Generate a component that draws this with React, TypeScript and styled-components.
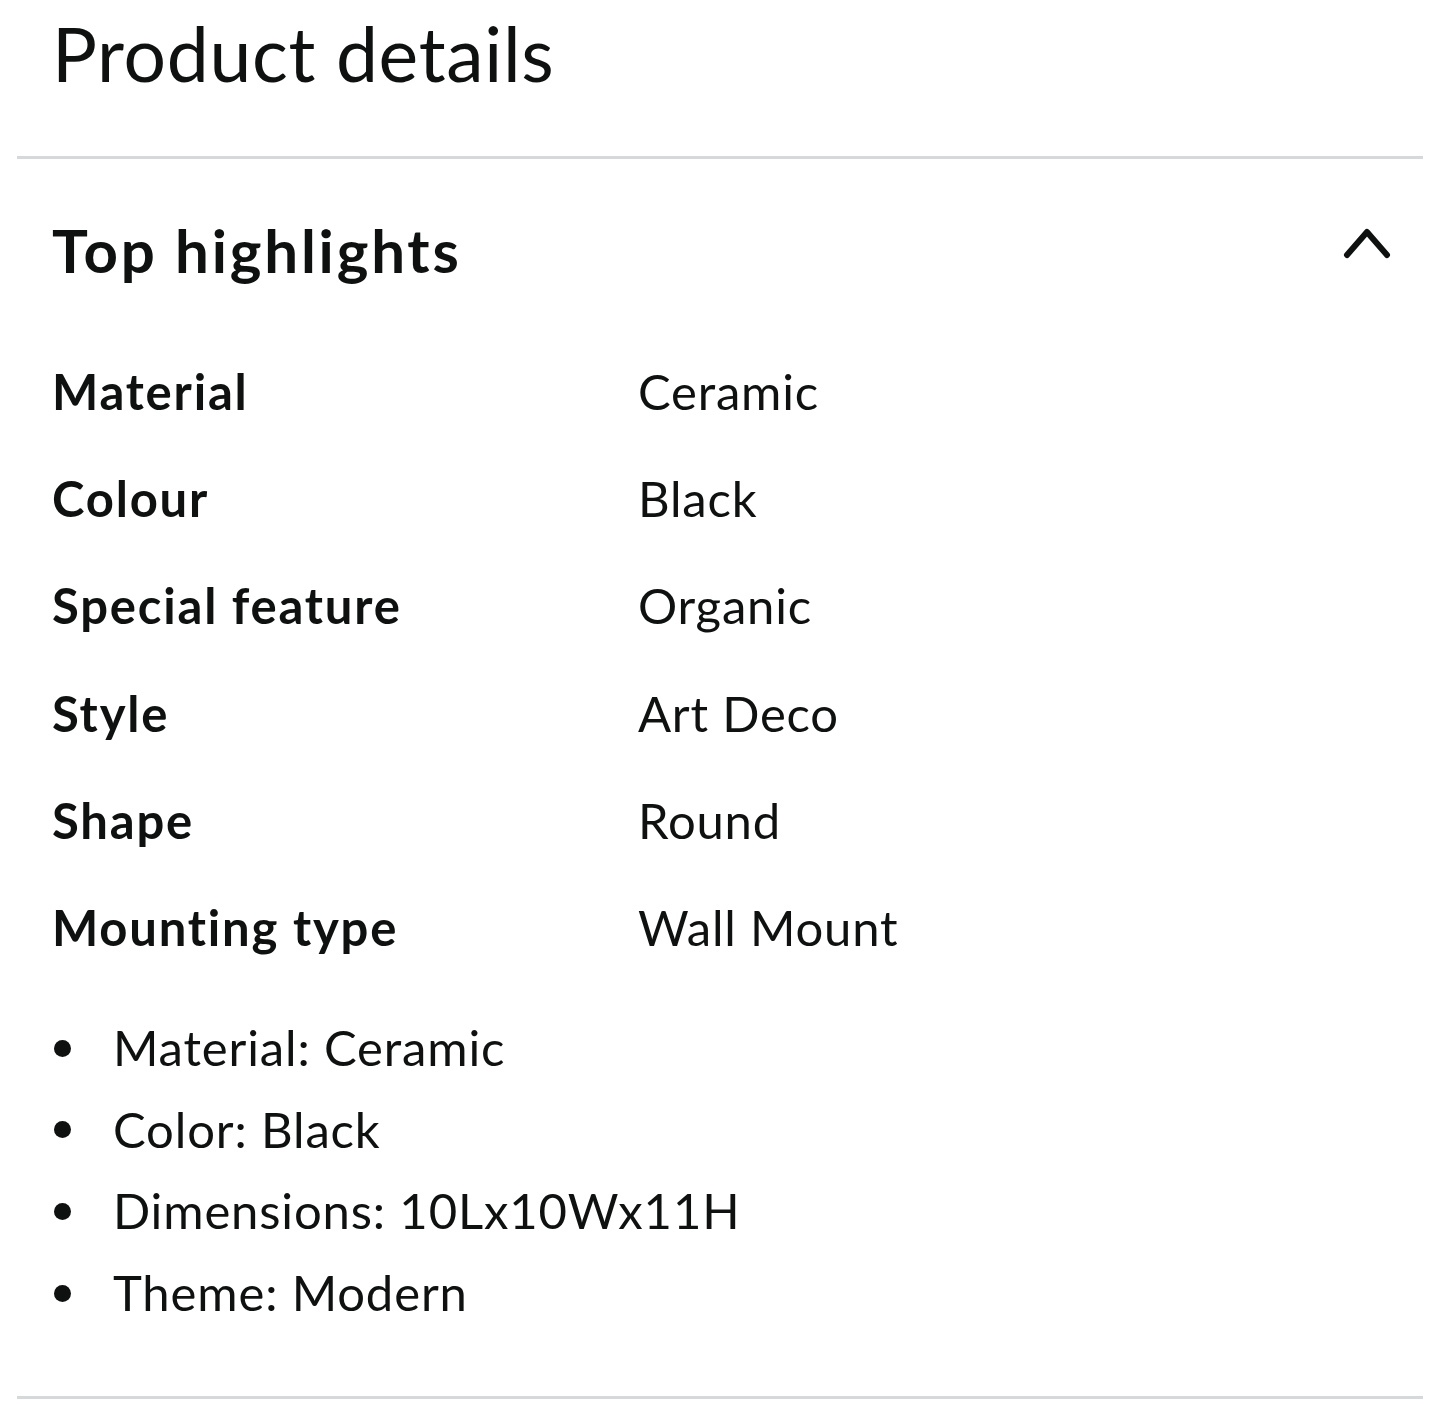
import React from "react";
import styled, { createGlobalStyle } from "styled-components";

const GlobalStyle = createGlobalStyle`
  html, body {
    margin: 0;
    padding: 0;
    background: #ffffff;
  }
  body {
    font-family: Lato, "Noto Sans", "Liberation Sans", sans-serif;
    color: #0f1111;
  }
`;

const Page = styled.div`
  width: 1406px;
  padding: 0 17px;
  display: flex;
  flex-direction: column;
`;

const Title = styled.h1`
  margin: 8px 0 0;
  padding: 0 0 0 35px;
  font-size: 75px;
  font-weight: 400;
  letter-spacing: 0.7px;
  line-height: 90px;
  height: 148px;
  box-sizing: border-box;
`;

const Divider = styled.hr`
  margin: 0;
  border: 0;
  height: 3px;
  background: #d5d9d9;
`;

const Section = styled.section`
  padding: 55px 0 62px 35px;
  display: flex;
  flex-direction: column;
`;

const SectionHeader = styled.div`
  display: flex;
  justify-content: space-between;
  align-items: flex-start;
  height: 72px;
`;

const SectionTitle = styled.h2`
  margin: 0;
  font-size: 60px;
  font-weight: 700;
  letter-spacing: 2.8px;
  line-height: 72px;
`;

const Chevron = styled.svg`
  margin-top: 14px;
  margin-right: 32px;
  flex: none;
`;

const Table = styled.div`
  margin-top: 51.5px;
  display: grid;
  grid-template-columns: 586px 1fr;
  grid-auto-rows: 107.4px;
  align-items: center;
`;

const Cell = styled.div<{ $label?: boolean }>`
  font-size: 49px;
  line-height: 107.4px;
  font-weight: ${(p) => (p.$label ? 700 : 400)};
  letter-spacing: ${(p) => (p.$label ? "1.8px" : "0.8px")};
  white-space: nowrap;
`;

const List = styled.ul`
  margin: 25px 0 0;
  padding: 0;
  list-style: none;
  display: flex;
  flex-direction: column;
`;

const Item = styled.li`
  display: flex;
  align-items: center;
  font-size: 49px;
  letter-spacing: 0.85px;
  line-height: 81.7px;
  white-space: nowrap;
`;

const Dot = styled.span`
  flex: none;
  width: 17px;
  height: 17px;
  border-radius: 50%;
  background: #0f1111;
  margin: 1px 42px 0 2px;
`;

const highlights: [string, string][] = [
  ["Material", "Ceramic"],
  ["Colour", "Black"],
  ["Special feature", "Organic"],
  ["Style", "Art Deco"],
  ["Shape", "Round"],
  ["Mounting type", "Wall Mount"],
];

const bullets = [
  "Material: Ceramic",
  "Color: Black",
  "Dimensions: 10Lx10Wx11H",
  "Theme: Modern",
];

export default function App() {
  return (
    <>
      <GlobalStyle />
      <Page>
        <Title>Product details</Title>
        <Divider />
        <Section>
          <SectionHeader>
            <SectionTitle>Top highlights</SectionTitle>
            <Chevron width="48" height="32" viewBox="0 0 48 32" aria-hidden="true">
              <polyline
                points="4,27 24,4 44,27"
                fill="none"
                stroke="#0f1111"
                strokeWidth="6"
                strokeLinecap="round"
                strokeLinejoin="round"
              />
            </Chevron>
          </SectionHeader>
          <Table>
            {highlights.map(([k, v]) => (
              <React.Fragment key={k}>
                <Cell $label>{k}</Cell>
                <Cell>{v}</Cell>
              </React.Fragment>
            ))}
          </Table>
          <List>
            {bullets.map((b) => (
              <Item key={b}>
                <Dot />
                {b}
              </Item>
            ))}
          </List>
        </Section>
        <Divider />
      </Page>
    </>
  );
}
